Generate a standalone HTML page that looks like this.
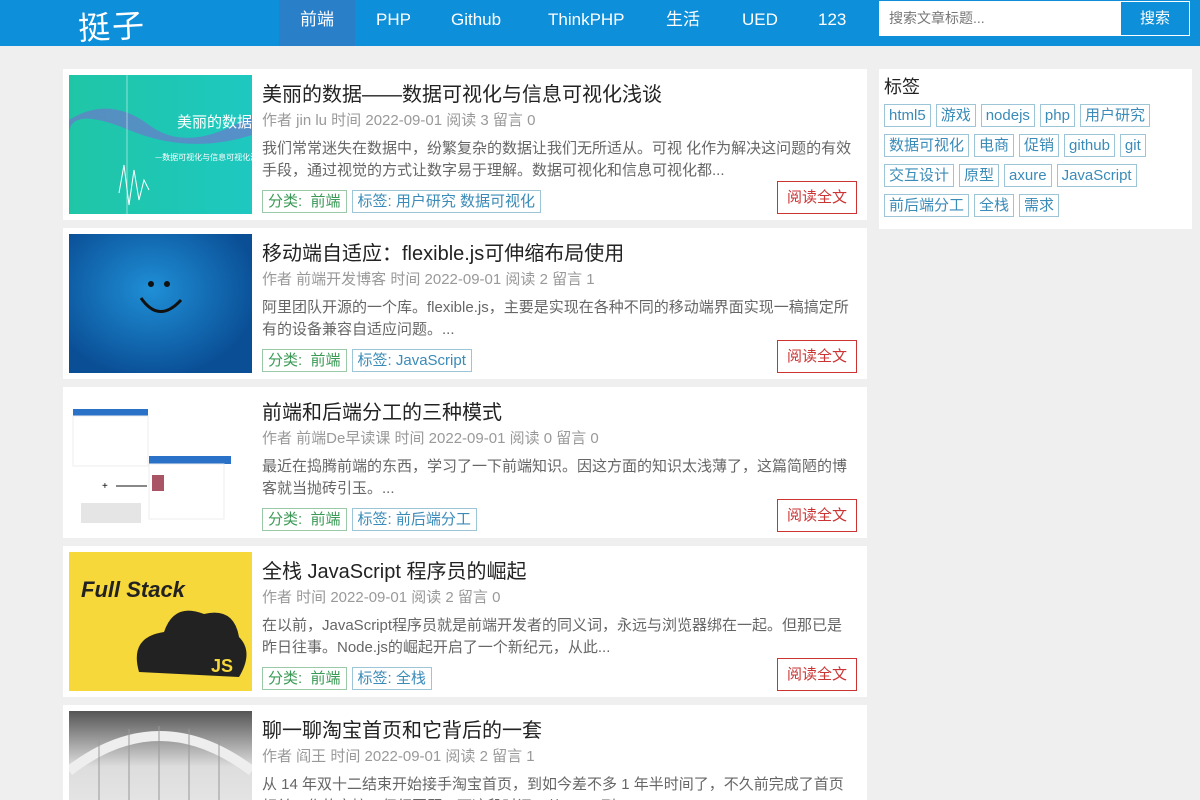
<!DOCTYPE html>
<html><head><meta charset="utf-8">
<style>
*{margin:0;padding:0;box-sizing:border-box}
html{overflow:hidden;width:1200px;height:800px}
body{width:1200px;height:800px;overflow:hidden;background:#efefef;font-family:"Liberation Sans","Noto Sans CJK SC",sans-serif;position:relative}
.hd{position:absolute;left:0;top:0;width:1200px;height:46px;background:#0d8fd9}
.logo{position:absolute;left:78px;top:2px;color:#fff;font-size:32px;font-family:"WenQuanYi Zen Hei","Noto Sans CJK SC",sans-serif;letter-spacing:2px;transform:rotate(-3deg)}
.on{position:absolute;left:279px;top:0;width:76px;height:46px;background:#2a7fc9}
.nav a{position:absolute;top:1px;color:#fff;font-size:17px;line-height:38px;text-decoration:none}
.srch{position:absolute;left:879px;top:1px;width:241px;height:35px;background:#fff;font-size:14px;color:#777;line-height:35px;padding-left:10px}
.sbtn{position:absolute;left:1120px;top:1px;width:70px;height:35px;background:#0d8fd9;border:1px solid #fff;color:#fff;font-size:15px;line-height:33px;text-align:center}
.card{position:absolute;left:63px;width:804px;height:151px;background:#fff;overflow:hidden}
.img{position:absolute;left:6px;top:6px;width:183px;height:139px;overflow:hidden}
.t{position:absolute;left:199px;top:9px;font-size:20px;color:#222}
.m{position:absolute;left:199px;top:40px;font-size:15px;color:#999}
.d{position:absolute;left:199px;top:69px;width:590px;font-size:15px;color:#666;line-height:22px}
.tg{position:absolute;left:199px;top:121px;display:flex;gap:5px}
.tg span{border:1px solid #9cc6d8;font-size:15px;height:23px;line-height:21px;padding:0 5px;color:#3a8bb8}
.tg span.c{color:#3a9a55;border-color:#9bc9a8}
.btn{position:absolute;left:714px;top:112px;width:80px;height:33px;border:1px solid #c33;color:#c33;font-size:15px;line-height:31px;text-align:center}
.side{position:absolute;left:879px;top:69px;width:313px;height:160px;background:#fff;padding:4px 5px}
.side h3{font-size:18px;font-weight:normal;color:#222;height:31px}
.tags{display:flex;flex-wrap:wrap;gap:7px 5px}
.tags span{border:1px solid #9cc6d8;font-size:15px;height:23px;line-height:21px;padding:0 4px;color:#3a8bb8}
</style></head><body>
<div class="hd">
<div class="logo">挺子</div>
<div class="on"></div>
<div class="nav"><a style="left:300px">前端</a><a style="left:376px">PHP</a><a style="left:451px">Github</a><a style="left:548px">ThinkPHP</a><a style="left:666px">生活</a><a style="left:742px">UED</a><a style="left:818px">123</a></div>
<div class="srch">搜索文章标题...</div><div class="sbtn">搜索</div>
</div>

<div class="card" style="top:69px">
<div class="img" style="background:linear-gradient(90deg,#1fc6a6,#1ec8c0);">
<svg width="183" height="139"><path d="M0 45 Q40 20 80 50 T183 40 L183 60 Q120 80 60 55 T0 60Z" fill="#7a6bd0" opacity=".6"/><line x1="58" y1="0" x2="58" y2="139" stroke="#fff" opacity=".5"/><text x="108" y="52" fill="#fff" font-size="15" font-family="Noto Sans CJK SC">美丽的数据</text><text x="86" y="85" fill="#fff" font-size="8" font-family="Noto Sans CJK SC">—数据可视化与信息可视化浅谈</text><path d="M50 118 L55 90 L60 130 L65 95 L70 125 L75 105 L80 115" stroke="#fff" fill="none"/></svg></div>
<div class="t">美丽的数据——数据可视化与信息可视化浅谈</div>
<div class="m">作者 jin lu 时间 2022-09-01 阅读 3 留言 0</div>
<div class="d">我们常常迷失在数据中，纷繁复杂的数据让我们无所适从。可视 化作为解决这问题的有效手段，通过视觉的方式让数字易于理解。数据可视化和信息可视化都...</div>
<div class="tg"><span class="c">分类:&nbsp; 前端</span><span>标签: 用户研究 数据可视化</span></div>
<div class="btn">阅读全文</div></div>

<div class="card" style="top:228px">
<div class="img" style="background:radial-gradient(ellipse at 45% 40%,#1f8fd6,#0a4f96 75%)">
<svg width="183" height="139"><circle cx="82" cy="50" r="3" fill="#111"/><circle cx="98" cy="50" r="3" fill="#111"/><path d="M72 64 Q90 90 112 66" stroke="#111" stroke-width="3" fill="none"/></svg></div>
<div class="t">移动端自适应：flexible.js可伸缩布局使用</div>
<div class="m">作者 前端开发博客 时间 2022-09-01 阅读 2 留言 1</div>
<div class="d">阿里团队开源的一个库。flexible.js，主要是实现在各种不同的移动端界面实现一稿搞定所有的设备兼容自适应问题。...</div>
<div class="tg"><span class="c">分类:&nbsp; 前端</span><span>标签: JavaScript</span></div>
<div class="btn">阅读全文</div></div>

<div class="card" style="top:387px">
<div class="img" style="background:#fff">
<svg width="183" height="139"><rect x="4" y="16" width="75" height="7" fill="#2a72c8"/><rect x="4" y="23" width="75" height="50" fill="none" stroke="#eee"/><rect x="80" y="63" width="82" height="8" fill="#2a72c8"/><rect x="80" y="71" width="75" height="55" fill="none" stroke="#eee"/><line x1="47" y1="93" x2="78" y2="93" stroke="#111"/><text x="33" y="96" font-size="10">+</text><rect x="83" y="82" width="12" height="16" fill="#a56"/><rect x="12" y="110" width="60" height="20" fill="#ccc" opacity=".5"/></svg></div>
<div class="t">前端和后端分工的三种模式</div>
<div class="m">作者 前端De早读课 时间 2022-09-01 阅读 0 留言 0</div>
<div class="d">最近在捣腾前端的东西，学习了一下前端知识。因这方面的知识太浅薄了，这篇简陋的博客就当抛砖引玉。...</div>
<div class="tg"><span class="c">分类:&nbsp; 前端</span><span>标签: 前后端分工</span></div>
<div class="btn">阅读全文</div></div>

<div class="card" style="top:546px">
<div class="img" style="background:#f7d83a">
<svg width="183" height="139"><text x="12" y="45" font-size="22" font-weight="bold" font-style="italic" font-family="Liberation Sans" fill="#222">Full Stack</text><path d="M70 120 Q60 85 95 80 Q105 50 135 62 Q165 55 170 85 Q185 100 170 125Z" fill="#222"/><text x="142" y="120" font-size="18" font-weight="bold" fill="#f7d83a">JS</text></svg></div>
<div class="t">全栈 JavaScript 程序员的崛起</div>
<div class="m">作者 时间 2022-09-01 阅读 2 留言 0</div>
<div class="d">在以前，JavaScript程序员就是前端开发者的同义词，永远与浏览器绑在一起。但那已是昨日往事。Node.js的崛起开启了一个新纪元，从此...</div>
<div class="tg"><span class="c">分类:&nbsp; 前端</span><span>标签: 全栈</span></div>
<div class="btn">阅读全文</div></div>

<div class="card" style="top:705px;height:95px">
<div class="img" style="background:linear-gradient(180deg,#555,#ddd 40%,#eee)">
<svg width="183" height="139"><path d="M0 60 Q90 -10 183 60" stroke="#eee" stroke-width="10" fill="none"/><g stroke="#999"><line x1="30" y1="30" x2="30" y2="139"/><line x1="60" y1="18" x2="60" y2="139"/><line x1="90" y1="15" x2="90" y2="139"/><line x1="120" y1="18" x2="120" y2="139"/><line x1="150" y1="30" x2="150" y2="139"/></g></svg></div>
<div class="t">聊一聊淘宝首页和它背后的一套</div>
<div class="m">作者 阎王 时间 2022-09-01 阅读 2 留言 1</div>
<div class="d">从 14 年双十二结束开始接手淘宝首页，到如今差不多 1 年半时间了，不久前完成了首页相关工作的交接，仔细回顾一下这段时间，从 PHP 到 Node...</div>
</div>

<div class="side"><h3>标签</h3>
<div class="tags"><span>html5</span><span>游戏</span><span>nodejs</span><span>php</span><span>用户研究</span><span>数据可视化</span><span>电商</span><span>促销</span><span>github</span><span>git</span><span>交互设计</span><span>原型</span><span>axure</span><span>JavaScript</span><span>前后端分工</span><span>全栈</span><span>需求</span></div></div>
</body></html>
